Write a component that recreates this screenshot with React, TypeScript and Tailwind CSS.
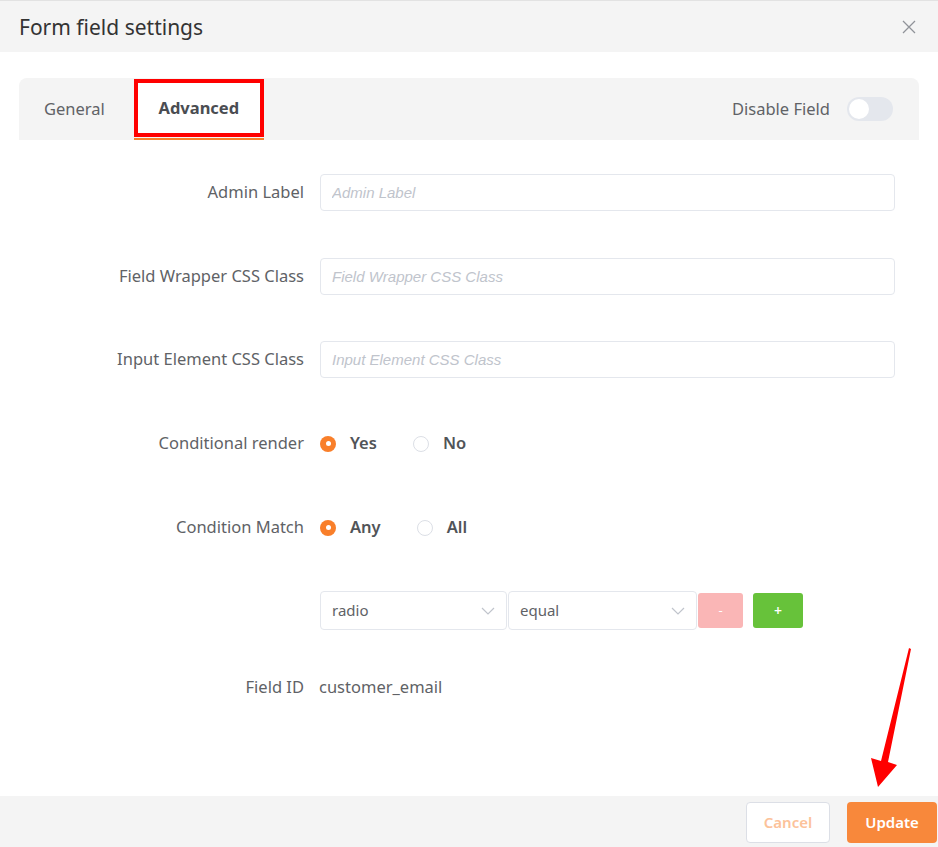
import React from "react";

const font = { fontFamily: '"Noto Sans", "Open Sans", sans-serif' };

function Radio({ checked, label }: { checked?: boolean; label: string }) {
  return (
    <label className="flex items-center mr-[36px]">
      {checked ? (
        <span className="w-[16px] h-[16px] rounded-full bg-[#f97f2a] flex items-center justify-center">
          <span className="w-[5px] h-[5px] rounded-full bg-white"></span>
        </span>
      ) : (
        <span className="w-[16px] h-[16px] rounded-full border border-[#dcdfe6] bg-white"></span>
      )}
      <span className="ml-[14px] text-[16.5px] font-semibold text-[#515458]">{label}</span>
    </label>
  );
}

function Chevron() {
  return (
    <svg width="14" height="8" viewBox="0 0 14 8" fill="none">
      <path d="M1 1l6 6 6-6" stroke="#c0c4cc" strokeWidth="1.2" />
    </svg>
  );
}

function Select({ value, width }: { value: string; width: string }) {
  return (
    <div
      className={`${width} h-[39px] border border-[#e4e7ed] rounded-[4px] bg-white flex items-center justify-between pl-[11px] pr-[11px]`}
    >
      <span className="text-[15px] text-[#606266]">{value}</span>
      <Chevron />
    </div>
  );
}

function Row({ label, children, className }: { label: string; children: React.ReactNode; className?: string }) {
  return (
    <div className={`flex items-center ${className ?? ""}`}>
      <div className="w-[301px] pr-[16px] text-right text-[16.5px] text-[#606266] shrink-0">{label}</div>
      <div className="flex-1 flex items-center">{children}</div>
    </div>
  );
}

function TextInput({ placeholder }: { placeholder: string }) {
  return (
    <input
      type="text"
      placeholder={placeholder}
      className="w-full h-[37px] border border-[#e4e7ed] rounded-[4px] px-[11px] text-[15px] italic placeholder-[#c0c4cc] focus:outline-none"
      style={{ fontFamily: '"Liberation Sans", Arial, sans-serif' }}
    />
  );
}

export default function App() {
  return (
    <div className="w-[938px] h-[847px] bg-white flex flex-col relative overflow-hidden" style={font}>
      {/* header */}
      <div className="h-[52px] bg-[#f4f4f4] border-t border-[#e2e2e2] flex items-center justify-between pl-[19px] pr-[22px] shrink-0">
        <h1 className="text-[21px] text-[#333] mt-[2px]">Form field settings</h1>
        <svg width="14" height="14" viewBox="0 0 14 14" fill="none">
          <path d="M1 1l12 12M13 1L1 13" stroke="#909399" strokeWidth="1.3" />
        </svg>
      </div>

      {/* body */}
      <div className="flex-1 px-[19px] pt-[26px]">
        <div className="h-[62px] bg-[#f4f4f4] rounded-t-lg flex items-stretch pr-[26px]">
          <div className="pl-[25px] pr-[29px] flex items-center text-[16.5px] text-[#606266]">General</div>
          <div className="w-[130px] flex flex-col">
            <div className="h-[59px] border-[4px] border-[#f00] mt-[1px] flex items-center justify-center text-[16.5px] font-bold text-[#4a4d52] bg-white">
              Advanced
            </div>
            <div className="h-[2px] bg-[#f97f2a] mt-[1px]"></div>
          </div>
          <div className="flex-1"></div>
          <div className="flex items-center">
            <span className="text-[16.5px] text-[#606266] mr-[17px]">Disable Field</span>
            <span className="w-[46px] h-[24px] rounded-full bg-[#e4e7ed] relative">
              <span className="absolute left-[2px] top-[2px] w-[20px] h-[20px] rounded-full bg-white"></span>
            </span>
          </div>
        </div>

        <div className="pr-[24px] pt-[34px]">
          <Row label="Admin Label">
            <TextInput placeholder="Admin Label" />
          </Row>
          <Row label="Field Wrapper CSS Class" className="mt-[47px]">
            <TextInput placeholder="Field Wrapper CSS Class" />
          </Row>
          <Row label="Input Element CSS Class" className="mt-[46px]">
            <TextInput placeholder="Input Element CSS Class" />
          </Row>
          <Row label="Conditional render" className="mt-[47px] h-[37px]">
            <Radio checked label="Yes" />
            <Radio label="No" />
          </Row>
          <Row label="Condition Match" className="mt-[47px] h-[37px]">
            <Radio checked label="Any" />
            <Radio label="All" />
          </Row>
          <Row label="" className="mt-[45px]">
            <Select value="radio" width="w-[187px]" />
            <div className="w-[1px]"></div>
            <Select value="equal" width="w-[189px]" />
            <button className="ml-[1px] w-[45px] h-[35px] rounded-[3px] bg-[#fab6b6] text-white text-[13px]">-</button>
            <button className="ml-[10px] w-[50px] h-[35px] rounded-[3px] bg-[#67c23a] text-white text-[14px] font-semibold">+</button>
          </Row>
          <Row label="Field ID" className="mt-[39px] h-[37px]">
            <span className="text-[16.5px] text-[#606266] -ml-[1px]">customer_email</span>
          </Row>
        </div>
      </div>

      {/* footer */}
      <div className="h-[51px] bg-[#f4f4f4] flex items-start justify-end pt-[6px] pr-[1px] shrink-0">
        <button className="w-[84px] h-[41px] bg-white border border-[#dcdfe6] rounded-[4px] text-[15px] font-semibold text-[#fcc29a]">
          Cancel
        </button>
        <button className="ml-[17px] w-[90px] h-[41px] bg-[#f8883b] rounded-[4px] text-[15px] font-semibold text-white">
          Update
        </button>
      </div>

      {/* annotation arrow */}
      <svg className="absolute left-0 top-0 pointer-events-none" width="938" height="847">
        <polygon points="909,648 911,649 888,762 897,765 878,787 871,758 881,761" fill="#ff0000" />
      </svg>
    </div>
  );
}
